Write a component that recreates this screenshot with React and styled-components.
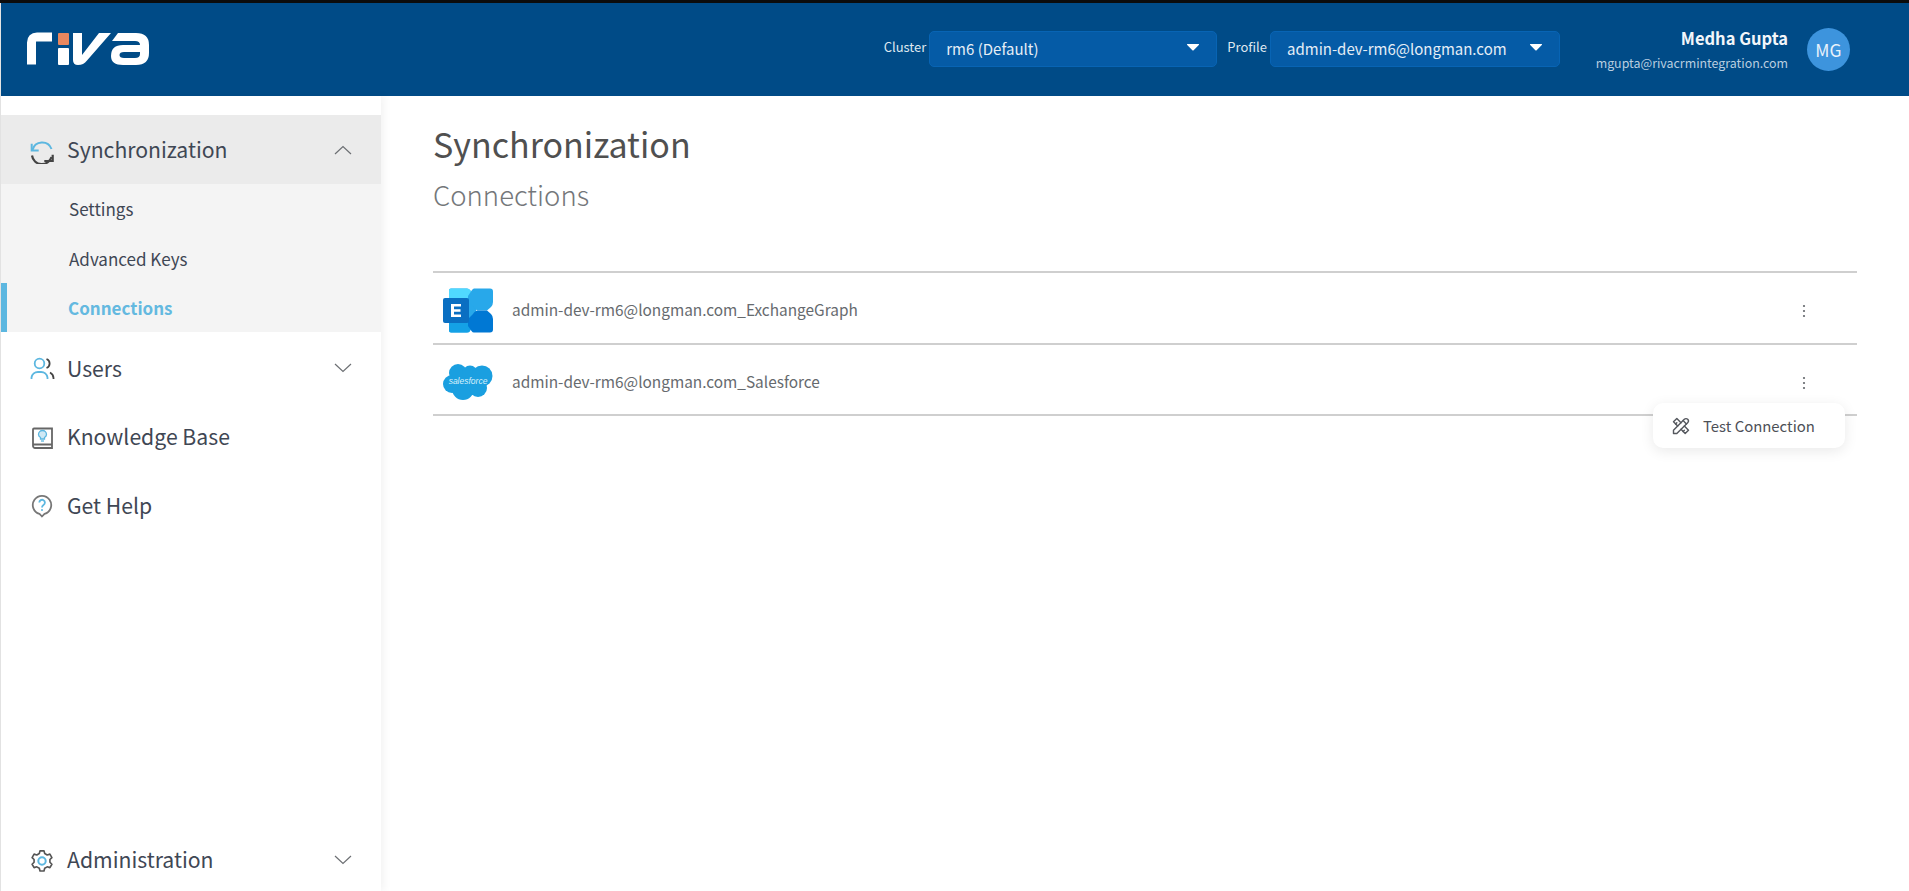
import React from 'react';
import styled, { createGlobalStyle } from 'styled-components';
import { TbTools } from 'react-icons/tb';

const Global = createGlobalStyle`
  html, body { margin: 0; padding: 0; height: 100%; background: #fff; overflow: hidden; }
  body { font-family: "Noto Sans CJK SC", "Noto Sans", sans-serif; }
  * { box-sizing: border-box; }
`;

const Page = styled.div`
  height: 891px;
  display: flex;
  flex-direction: column;
  border-left: 1px solid #e4e4e4;
  position: relative;
`;
const TopEdge = styled.div`
  position: absolute;
  left: -1px;
  right: 0;
  top: 0;
  height: 3px;
  background: #0c0c0c;
`;
const Header = styled.header`
  height: 96px;
  flex: none;
  padding: 3px 59px 0 26px;
  background: #004b87;
  display: flex;
  align-items: center;
`;
const Logo = styled.svg`
  width: 123px;
  height: 34px;
  display: block;
  margin-top: -1px;
`;
const Controls = styled.div`
  margin-left: auto;
  display: flex;
  align-items: center;
`;
const FieldLabel = styled.span`
  font-size: 13px;
  color: #dfe8f0;
  margin-right: ${p => p.$gap}px;
  margin-top: -6px;
`;
const Select = styled.div`
  width: ${p => p.$w}px;
  height: 36px;
  margin-top: -2px;
  margin-right: ${p => p.$after}px;
  padding: 0 17px 0 16px;
  border: 1px solid #0864b4;
  border-radius: 5px;
  background: #055ba6;
  color: #e6eef6;
  font-size: 15px;
  display: flex;
  align-items: center;
  justify-content: space-between;
`;
const Caret = styled.svg`
  width: 12px;
  height: 7px;
  margin-top: -2px;
`;
const UserBlock = styled.div`
  margin-right: 19px;
  text-align: right;
  width: 228px;
`;
const UserName = styled.div`
  color: #f2f6fa;
  font-size: 16.5px;
  font-weight: 700;
  line-height: 22px;
`;
const UserMail = styled.div`
  color: #b9cee0;
  font-size: 12.4px;
  line-height: 20px;
  margin-top: 4px;
`;
const Avatar = styled.div`
  width: 43px;
  height: 43px;
  border-radius: 50%;
  background: #3d94dd;
  color: #e8f2fb;
  font-size: 17.5px;
  display: flex;
  align-items: center;
  justify-content: center;
`;
const Body = styled.div`
  flex: 1;
  min-height: 0;
  display: flex;
`;
const Sidebar = styled.nav`
  width: 380px;
  flex: none;
  padding-top: 19px;
  display: flex;
  flex-direction: column;
  box-shadow: 3px 0 8px rgba(0, 0, 0, 0.05);
  background: #fff;
`;
const NavRow = styled.div`
  height: ${p => (p.$open ? 69 : 68.5)}px;
  flex: none;
  padding: 0 29px 0 28px;
  display: flex;
  align-items: center;
  background: ${p => (p.$open ? '#ebebeb' : 'transparent')};
  margin-top: ${p => p.$top || 0}px;
  color: #3f4754;
  font-size: 21.2px;
`;
const BottomRow = styled(NavRow)`
  margin-top: auto;
  margin-bottom: -3px;
`;
const NavIcon = styled.svg`
  width: 26px;
  height: 26px;
  flex: none;
  margin-right: 12px;
  margin-top: ${p => p.$drop || 0}px;
  fill: none;
  stroke-width: 1.8;
`;
const NavText = styled.span`
  flex: 1;
  margin-bottom: 2.5px;
`;
const Chevron = styled.svg`
  width: 18px;
  height: 10px;
  flex: none;
  fill: none;
  stroke: #6c6f73;
  stroke-width: 1.2;
`;
const SubList = styled.div`
  background: #f4f4f4;
  height: 148px;
  display: flex;
  flex-direction: column;
`;
const SubItem = styled.div`
  height: ${p => (p.$active ? 49 : 50)}px;
  padding: ${p => (p.$active ? '0 0 0 61px' : '0 0 1px 68px')};
  display: flex;
  align-items: center;
  font-size: 17px;
  font-weight: ${p => (p.$active ? 700 : 400)};
  color: ${p => (p.$active ? '#64b9e0' : '#3f4754')};
  border-left: ${p => (p.$active ? '6px solid #5cb7e0' : '0')};
`;
const Main = styled.main`
  flex: 1;
  min-width: 0;
  padding: 23px 52px 0 52px;
  position: relative;
`;
const Title = styled.h1`
  margin: 0;
  font-size: 34px;
  font-weight: 400;
  line-height: 50px;
  color: #505050;
`;
const Subtitle = styled.h2`
  margin: 0 0 52px;
  font-size: 27.5px;
  font-weight: 300;
  line-height: 50px;
  color: #74777a;
`;
const List = styled.div`
  border-top: 2px solid #cfcfcf;
  position: relative;
`;
const Row = styled.div`
  height: 71.7px;
  padding: 0 51px 0 10px;
  border-bottom: 2px solid #cfcfcf;
  display: flex;
  align-items: center;
`;
const RowLogo = styled.svg`
  width: 50px;
  height: 46px;
  flex: none;
  margin: 6px 19px 0 0;
`;
const RowText = styled.span`
  flex: 1;
  font-size: 15.4px;
  color: #666a6e;
  margin-top: 2px;
`;
const Dots = styled.svg`
  width: 4px;
  height: 14px;
  flex: none;
  fill: #62666b;
  margin-top: 7px;
`;
const Menu = styled.div`
  position: absolute;
  top: 130px;
  right: 12px;
  width: 192px;
  height: 45px;
  padding-left: 18px;
  border-radius: 10px;
  background: #fff;
  box-shadow: 0 3px 14px rgba(0, 0, 0, 0.09);
  display: flex;
  align-items: center;
  gap: 12px;
  color: #4d5057;
  font-size: 14.9px;
`;
const MenuIcon = styled(TbTools)`
  width: 20px;
  height: 20px;
  stroke-width: 1.7;
  color: #55585e;
`;

const Up = () => (
  <Chevron viewBox="0 0 18 10"><path d="M1 9 9 1.500 17 9" /></Chevron>
);
const Down = () => (
  <Chevron viewBox="0 0 18 10"><path d="M1 1 9 8.500 17 1" /></Chevron>
);
const CaretDown = () => (
  <Caret viewBox="0 0 12 7"><path d="M.6 0h10.800a.5.5 0 0 1 .4.9L6.400 6.400a.6.6 0 0 1-.8 0L.2.9A.5.5 0 0 1 .6 0z" fill="#fff" /></Caret>
);
const MoreDots = () => (
  <Dots viewBox="0 0 4 14"><circle cx="2" cy="2" r="1.100" /><circle cx="2" cy="7" r="1.100" /><circle cx="2" cy="12" r="1.100" /></Dots>
);

export default function App() {
  return (
    <>
      <Global />
      <Page>
        <TopEdge />
        <Header>
          <Logo viewBox="0 0 123 34">
            <path d="M4.500 33V11Q4.500 5.500 10 5.500H25" fill="none" stroke="#fff" strokeWidth="9" transform="translate(0 -.5)" strokeLinejoin="round" />
            <rect x="31" y="1" width="11" height="12" rx="1" fill="#e8875e" />
            <rect x="31" y="16" width="11" height="17" rx="1" fill="#fff" />
            <path d="M46 1H55V23L72 1H84L60 28.500Q56.500 33 51 33Q46 33 46 28Z" fill="#fff" />
            <path fillRule="evenodd" d="M91 1H109Q122 1 122 13V21Q122 33 109 33H96Q84 33 84 24Q84 13 96 13H113Q113 9 108 9H85ZM97 20Q92.500 20 92.500 23Q92.500 26 97 26H108Q113 26 113 22V20Z" fill="#fff" />
          </Logo>
          <Controls>
            <FieldLabel $gap={3}>Cluster</FieldLabel>
            <Select $w={288} $after={10}><span>rm6 (Default)</span><CaretDown /></Select>
            <FieldLabel $gap={3}>Profile</FieldLabel>
            <Select $w={290} $after={0}><span>admin-dev-rm6@longman.com</span><CaretDown /></Select>
            <UserBlock>
              <UserName>Medha Gupta</UserName>
              <UserMail>mgupta@rivacrmintegration.com</UserMail>
            </UserBlock>
            <Avatar>MG</Avatar>
          </Controls>
        </Header>
        <Body>
          <Sidebar>
            <NavRow $open>
              <NavIcon viewBox="0 0 26 26" $drop={2}>
                <path d="M3.500 12A10 10 0 0 1 22.500 11" stroke="#5cb7e0" strokeWidth="2" />
                <path d="M2.700 5.800V12.500H9.700" stroke="#5cb7e0" strokeWidth="2" />
                <path d="M3 17.500A10 10 0 0 0 22.500 19" stroke="#444" strokeWidth="2.200" />
                <path d="M23.700 16.800V23H15.300" stroke="#444" strokeWidth="2.200" />
              </NavIcon>
              <NavText>Synchronization</NavText>
              <Up />
            </NavRow>
            <SubList>
              <SubItem>Settings</SubItem>
              <SubItem>Advanced Keys</SubItem>
              <SubItem $active>Connections</SubItem>
            </SubList>
            <NavRow $top={2}>
              <NavIcon viewBox="0 0 26 26">
                <circle cx="10.500" cy="8.500" r="4.800" stroke="#5cb7e0" />
                <path d="M2.500 24V22.500A6.500 6.500 0 0 1 9 17H12A6.500 6.500 0 0 1 18.500 22.500V24" stroke="#5cb7e0" />
                <path d="M17.500 4A4.800 4.800 0 0 1 17.500 13" stroke="#444" />
                <path d="M21 17.500A6.500 6.500 0 0 1 24.500 23V24" stroke="#444" />
              </NavIcon>
              <NavText>Users</NavText>
              <Down />
            </NavRow>
            <NavRow>
              <NavIcon viewBox="0 0 26 26">
                <path d="M5 4.500H23V24H6A2 2 0 0 1 4 22V5.500A1 1 0 0 1 5 4.500Z" stroke="#666" />
                <path d="M4 20.500H23" stroke="#666" strokeWidth="2" />
                <path d="M11.500 15V13.500C10 12.500 9.500 11.500 9.500 10.500A4 4 0 0 1 17.500 10.500C17.500 11.500 17 12.500 15.500 13.500V15Z" stroke="#5cb7e0" fill="#cfe9f5" strokeWidth="1.300" />
                <path d="M12 17H15" stroke="#5cb7e0" strokeWidth="1.300" />
              </NavIcon>
              <NavText>Knowledge Base</NavText>
            </NavRow>
            <NavRow>
              <NavIcon viewBox="0 0 26 26">
                <path d="M10.500 21.900A9.200 9.200 0 1 1 15.500 21.900L13 24.500Z" stroke="#777" strokeLinejoin="round" />
                <path d="M10.300 10.500A2.800 2.800 0 1 1 14.500 13C13.500 13.700 13 14.200 13 15.500" stroke="#5cb7e0" />
                <circle cx="13" cy="18" r="1" fill="#5cb7e0" />
              </NavIcon>
              <NavText>Get Help</NavText>
            </NavRow>
            <BottomRow>
              <NavIcon viewBox="0 0 26 26">
                <path d="M10.800 2.800H15.200L16 5.800 18.800 7.400 21.800 6.500 24 10.300 21.800 12.500V15.500L24 17.700 21.800 21.500 18.800 20.600 16 22.200 15.200 25.200H10.800L10 22.200 7.200 20.600 4.200 21.500 2 17.700 4.200 15.500V12.500L2 10.300 4.200 6.500 7.200 7.400 10 5.800Z" stroke="#555" strokeLinejoin="round" transform="translate(1.300 1.300) scale(.9)" />
                <circle cx="13" cy="14" r="3.700" stroke="#5cb7e0" strokeWidth="2" />
              </NavIcon>
              <NavText>Administration</NavText>
              <Down />
            </BottomRow>
          </Sidebar>
          <Main>
            <Title>Synchronization</Title>
            <Subtitle>Connections</Subtitle>
            <List>
              <Row>
                <RowLogo viewBox="0 0 50 46">
                  <path d="M8 .5H24Q26 .5 27 2L33 10V35L27 43Q26 44.500 24 44.500H8Q6 44.500 6 42.500V2.500Q6 .5 8 .5Z" fill="#28a8ea" />
                  <path d="M8 .5H24Q26 .5 27 2L34 12H6V2.500Q6 .5 8 .5Z" fill="#50d9ff" />
                  <path d="M6 34H27V42Q27 44.500 24 44.500H8Q6 44.500 6 42.500Z" fill="#14a1e6" />
                  <path d="M31 .5H47Q50 .5 50 3.500V14Q50 17 48 19L44 22.500H34L25 14V8L29 2Q30 .5 31 .5Z" fill="#28a8ea" />
                  <path d="M35 22.500H44L48 26Q50 28 50 31V41.500Q50 44.500 47 44.500H31Q29.500 44.500 28.500 43L25 38V31L30 26Q32 22.500 35 22.500Z" fill="#0078d4" />
                  <rect x="0" y="10" width="26" height="25" rx="2" fill="#0a6fc2" />
                  <path d="M8 16H18V18.500H11V21.300H17.500V23.700H11V26.500H18V29H8Z" fill="#fff" />
                </RowLogo>
                <RowText>admin-dev-rm6@longman.com_ExchangeGraph</RowText>
                <MoreDots />
              </Row>
              <Row>
                <RowLogo viewBox="0 0 50 46">
                  <g fill="#1a9fe0">
                    <circle cx="15" cy="13" r="9" />
                    <circle cx="27" cy="13" r="7.500" />
                    <circle cx="39" cy="16" r="10.500" />
                    <circle cx="9" cy="24" r="9" />
                    <circle cx="20" cy="29" r="11" />
                    <circle cx="35" cy="28" r="9" />
                    <rect x="10" y="14" width="30" height="16" />
                  </g>
                  <text x="25" y="24" textAnchor="middle" fontSize="8.500" fontStyle="italic" fill="#d9f0fb" fontFamily="Liberation Sans, sans-serif">salesforce</text>
                </RowLogo>
                <RowText>admin-dev-rm6@longman.com_Salesforce</RowText>
                <MoreDots />
              </Row>
              <Menu><MenuIcon /><span>Test Connection</span></Menu>
            </List>
          </Main>
        </Body>
      </Page>
    </>
  );
}
